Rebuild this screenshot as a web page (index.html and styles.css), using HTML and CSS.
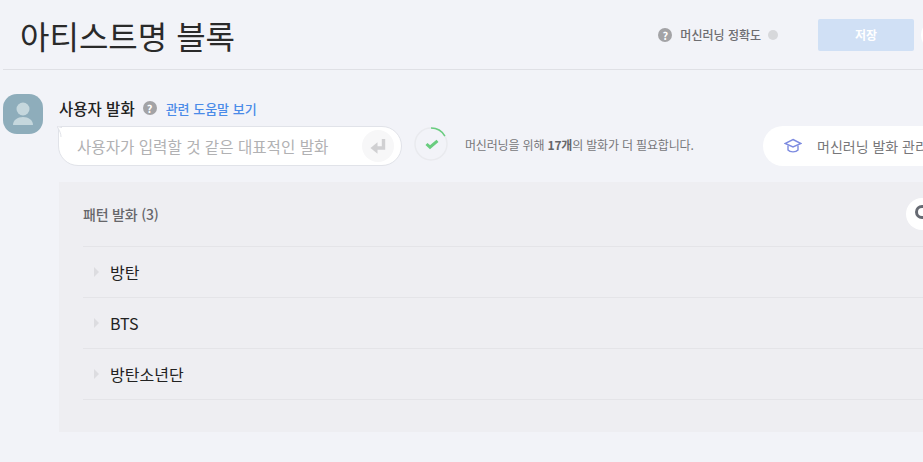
FILE: index.html
```html
<!DOCTYPE html>
<html lang="ko">
<head>
    <meta charset="UTF-8">
    <meta name="viewport" content="width=device-width, initial-scale=1.0">
    <title>아티스트명 블록</title>
    <link rel="stylesheet" href="styles.css">
</head>
<body>

    <div class="page">
        <header class="header">
            <h1 class="title">아티스트명 블록</h1>
            <div class="accuracy">
                <span class="help">?</span>
                <span class="accuracy-label">머신러닝 정확도</span>
                <span class="accuracy-dot"></span>
            </div>
            <button class="save-btn">저장</button>
            <span class="header-edge"></span>
        </header>

        <section class="utterance">
            <div class="avatar">
                <svg width="40" height="40" viewBox="0 0 40 40">
                    <circle cx="20" cy="15" r="6.500" fill="#c5d7dd"/>
                    <path d="M10 31c0-5 4.500-8 10-8s10 3 10 8z" fill="#c5d7dd"/>
                </svg>
            </div>
            <div class="utterance-main">
                <div class="label-row">
                    <span class="label">사용자 발화</span>
                    <span class="help">?</span>
                    <a class="help-link">관련 도움말 보기</a>
                </div>
                <div class="input-row">
                    <div class="input-box">
                        <svg class="bubble-tail" width="10" height="12" viewBox="0 0 10 12">
                            <path d="M0 0.500L9.500 1.500V11.500C5.500 9 3 5 0 0.500z" fill="#fff"/>
                            <path d="M0 0.500L5 1.500M0 0.500C3 5 4 8 4 11" fill="none" stroke="#e1e3e9"/>
                        </svg>
                        <span class="placeholder">사용자가 입력할 것 같은 대표적인 발화</span>
                        <span class="enter-btn">
                            <svg width="16" height="16" viewBox="0 0 16 16">
                                <path d="M13.500 1V10H6" fill="none" stroke="#d0d0d2" stroke-width="3.400"/>
                                <path d="M0.500 10L7.500 4.200V15.800z" fill="#d0d0d2"/>
                            </svg>
                        </span>
                    </div>
                    <svg class="progress" width="34" height="34" viewBox="0 0 34 34">
                        <circle cx="17" cy="17" r="16" fill="none" stroke="#e9eaee" stroke-width="1.500"/>
                        <path d="M17 1A16 16 0 0 1 30.900 9" fill="none" stroke="#69cd7f" stroke-width="1.500"/>
                        <path d="M12.500 17L16 20.200L23.500 13.800" fill="none" stroke="#69cd7f" stroke-width="3"/>
                    </svg>
                    <p class="progress-text">머신러닝을 위해 <b>17개</b>의 발화가 더 필요합니다.</p>
                    <div class="ml-btn">
                        <svg width="18" height="16" viewBox="0 0 18 16">
                            <path d="M9 1.500L17 5.500L9 9L1 5.500z" fill="none" stroke="#7d8be0" stroke-width="1.400"/>
                            <path d="M4 7.500V12C6 14.500 12 14.500 14 12V7.500" fill="none" stroke="#7d8be0" stroke-width="1.400"/>
                        </svg>
                        <span>머신러닝 발화 관리</span>
                    </div>
                </div>

                <div class="panel">
                    <div class="panel-head">
                        <span class="panel-title">패턴 발화 (3)</span>
                        <span class="search-btn">
                            <svg width="20" height="20" viewBox="0 0 20 20">
                                <circle cx="8" cy="8" r="5.500" fill="none" stroke="#666a72" stroke-width="3"/>
                                <path d="M12 12L18 18" stroke="#666a72" stroke-width="3"/>
                            </svg>
                        </span>
                    </div>
                    <ul class="pattern-list">
                        <li class="pattern"><span class="arrow"></span>방탄</li>
                        <li class="pattern"><span class="arrow"></span>BTS</li>
                        <li class="pattern"><span class="arrow"></span>방탄소년단</li>
                    </ul>
                </div>
            </div>
        </section>
    </div>

</body>
</html>
```

FILE: styles.css
```css
html, body {
    margin: 0;
    padding: 0;
    height: 100%;
    overflow: hidden;
}

body {
    font-family: "Noto Sans CJK KR", "Noto Sans", sans-serif;
    background: #f2f3f8;
    color: #222;
}

.page {
    width: 923px;
    overflow: hidden;
}

.header {
    display: flex;
    align-items: center;
    box-sizing: border-box;
    width: 950px;
    height: 70px;
    margin-left: 3px;
    padding: 0 0 0 17px;
    border-bottom: 1px solid #dfe0e5;
}

.title {
    margin: 0;
    font-size: 32px;
    font-weight: 400;
    line-height: 1;
    color: #2a2a2a;
}

.help {
    display: inline-block;
    width: 14px;
    height: 14px;
    border-radius: 50%;
    background: #a3a3a6;
    color: #fff;
    font-size: 11px;
    font-weight: 700;
    line-height: 14px;
    text-align: center;
}

.accuracy {
    display: flex;
    align-items: center;
    margin-left: auto;
}

.accuracy-label {
    margin-left: 8px;
    font-size: 12px;
    font-weight: 500;
    color: #6d6d70;
}

.accuracy-dot {
    width: 10px;
    height: 10px;
    margin-left: 7px;
    border-radius: 50%;
    background: #d7d8db;
}

.save-btn {
    width: 96px;
    height: 32px;
    margin-left: 40px;
    padding: 0;
    border: none;
    border-radius: 2px;
    background: #d0e0f5;
    color: #fff;
    font-family: inherit;
    font-size: 12px;
    font-weight: 700;
}

.header-edge {
    width: 32px;
    height: 32px;
    margin-left: 7px;
    border-radius: 50%;
    background: #fff;
}

.utterance {
    display: flex;
    margin-left: 3px;
    padding-top: 24px;
}

.avatar {
    flex: none;
    width: 40px;
    height: 40px;
    border-radius: 14px;
    background: #8eadbb;
}

.utterance-main {
    flex: none;
    width: 880px;
    margin-left: 16px;
}

.label-row {
    display: flex;
    align-items: center;
    height: 28px;
}

.label {
    font-size: 15.500px;
    font-weight: 500;
    color: #222;
}

.label-row .help {
    margin-left: 8px;
}

.help-link {
    margin-left: 9px;
    font-size: 13px;
    font-weight: 500;
    color: #4a8be8;
}

.input-row {
    display: flex;
    align-items: center;
    width: 900px;
    height: 40px;
    margin-top: 4px;
    margin-left: -1px;
}

.input-box {
    flex: none;
    display: flex;
    align-items: center;
    justify-content: space-between;
    box-sizing: border-box;
    width: 344px;
    height: 40px;
    padding: 0 7px 0 18px;
    background: #fff;
    border: 1px solid #e1e3e9;
    border-radius: 3px 20px 20px 20px;
    position: relative;
}

.bubble-tail {
    position: absolute;
    left: -2px;
    top: -1px;
}

.placeholder {
    font-size: 15.600px;
    color: #b1b1b3;
    white-space: nowrap;
}

.enter-btn {
    display: flex;
    align-items: center;
    justify-content: center;
    width: 32px;
    height: 32px;
    border-radius: 50%;
    background: #f7f7f8;
}

.progress {
    flex: none;
    align-self: flex-start;
    margin: 1px 0 0 12px;
}

.progress-text {
    flex: none;
    width: 298px;
    margin: 0 0 0 17px;
    font-size: 12px;
    letter-spacing: -0.170px;
    color: #77777a;
    white-space: nowrap;
    position: relative;
    top: -2px;
}

.progress-text b {
    font-weight: 700;
    color: #66666a;
}

.ml-btn {
    flex: none;
    display: flex;
    align-items: center;
    height: 40px;
    padding: 0 40px 0 21px;
    background: #fff;
    border-radius: 20px;
    font-size: 14px;
    color: #77777a;
    white-space: nowrap;
}

.ml-btn span {
    margin-left: 15px;
}

.panel {
    box-sizing: border-box;
    width: 880px;
    height: 250px;
    margin-top: 16px;
    padding: 16px 0 0 24px;
    background: #eeeef2;
}

.panel-head {
    display: flex;
    align-items: center;
    justify-content: space-between;
    height: 32px;
    padding-bottom: 16px;
    border-bottom: 1px solid #e4e4e8;
}

.panel-title {
    font-size: 14px;
    font-weight: 500;
    letter-spacing: -0.200px;
    color: #66666a;
}

.search-btn {
    display: flex;
    align-items: center;
    box-sizing: border-box;
    width: 32px;
    height: 32px;
    margin-right: 1px;
    padding-left: 8px;
    border-radius: 50%;
    background: #fff;
}

.pattern-list {
    margin: 0;
    padding: 0;
    list-style: none;
}

.pattern {
    display: flex;
    align-items: center;
    height: 50px;
    border-bottom: 1px solid #e4e4e8;
    font-size: 16px;
    color: #222;
}

.arrow {
    width: 0;
    height: 0;
    margin: 0 11px;
    border-left: 5px solid #dcdce0;
    border-top: 5px solid transparent;
    border-bottom: 5px solid transparent;
}
```
